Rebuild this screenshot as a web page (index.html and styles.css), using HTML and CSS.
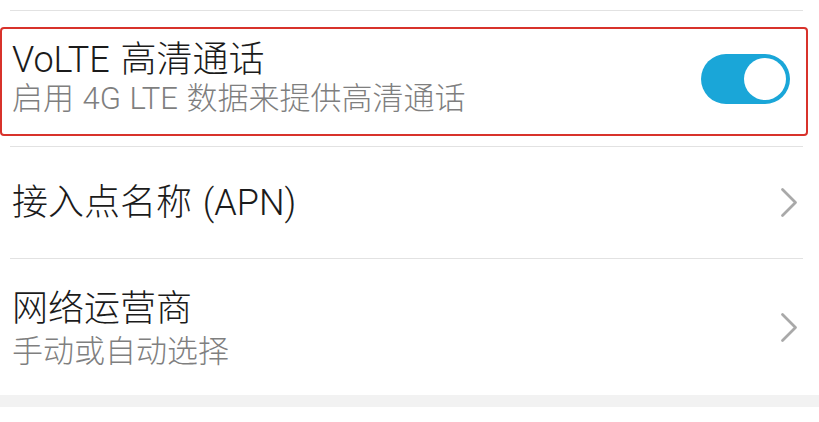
FILE: index.html
```html
<!DOCTYPE html>
<html lang="zh-CN">
<head>
<meta charset="utf-8">
<title>移动网络</title>
<link rel="stylesheet" href="styles.css">
</head>
<body>
<div class="page">
  <div class="list">
    <div class="row row-top"></div>
    <div class="row row-volte highlighted">
      <div class="texts">
        <div class="title">VoLTE 高清通话</div>
        <div class="subtitle">启用 4G LTE 数据来提供高清通话</div>
      </div>
      <div class="toggle on"><span class="knob"></span></div>
    </div>
    <div class="row row-apn">
      <div class="texts">
        <div class="title">接入点名称 (APN)</div>
      </div>
      <svg class="chevron" width="18" height="31" viewBox="0 0 18 31"><polyline points="2.5,2.5 15.5,15.5 2.5,28.5" fill="none" stroke="#a9a9a9" stroke-width="2.8" stroke-linecap="round" stroke-linejoin="round"/></svg>
    </div>
    <div class="row row-op last">
      <div class="texts texts-op">
        <div class="title">网络运营商</div>
        <div class="subtitle sub-gap">手动或自动选择</div>
      </div>
      <svg class="chevron" width="18" height="31" viewBox="0 0 18 31"><polyline points="2.5,2.5 15.5,15.5 2.5,28.5" fill="none" stroke="#a9a9a9" stroke-width="2.8" stroke-linecap="round" stroke-linejoin="round"/></svg>
    </div>
  </div>
  <div class="band"></div>
  <div class="bottom"></div>
</div>
</body>
</html>
```
FILE: styles.css
```css
html, body {
  margin: 0;
  padding: 0;
  background: #ffffff;
}
.page {
  width: 819px;
  height: 422px;
  overflow: hidden;
  font-family: Roboto, "Noto Sans CJK SC", sans-serif;
  background: #ffffff;
}
.list {
  padding: 0 16px 0 10px;
}
.row {
  display: flex;
  align-items: center;
  justify-content: space-between;
  border-bottom: 1px solid #e2e2e2;
  padding-left: 2px;
  position: relative;
}
.row.last {
  border-bottom: none;
}
.row-top {
  height: 10px;
}
.row-volte {
  height: 135px;
}
.row-apn {
  height: 111px;
}
.row-op {
  height: 136px;
}
.texts {
  display: flex;
  flex-direction: column;
}
.texts-op {
  margin-top: 5px;
}
.title {
  font-size: 36px;
  line-height: 40px;
  color: #1b1b1b;
  font-weight: 300;
  word-spacing: 2px;
}
.subtitle {
  font-size: 31px;
  line-height: 37px;
  color: #7f7f7f;
  font-weight: 300;
  word-spacing: 1px;
}
.sub-gap {
  margin-top: 4px;
}
.highlighted::after {
  content: "";
  position: absolute;
  left: -10px;
  right: -5px;
  top: 16px;
  bottom: 10px;
  border: 2.5px solid #d8322b;
  border-radius: 4px;
  pointer-events: none;
}
.toggle {
  width: 89px;
  height: 50px;
  border-radius: 25px;
  background: #1aa6d8;
  display: flex;
  align-items: center;
  justify-content: flex-end;
  padding: 0 4px;
  box-sizing: border-box;
  margin-right: 13px;
}
.knob {
  width: 42px;
  height: 42px;
  border-radius: 50%;
  background: #ffffff;
}
.chevron {
  margin-right: 5px;
}
.band {
  height: 12px;
  background: #f2f2f2;
}
.bottom {
  height: 15px;
  background: #ffffff;
}
```
